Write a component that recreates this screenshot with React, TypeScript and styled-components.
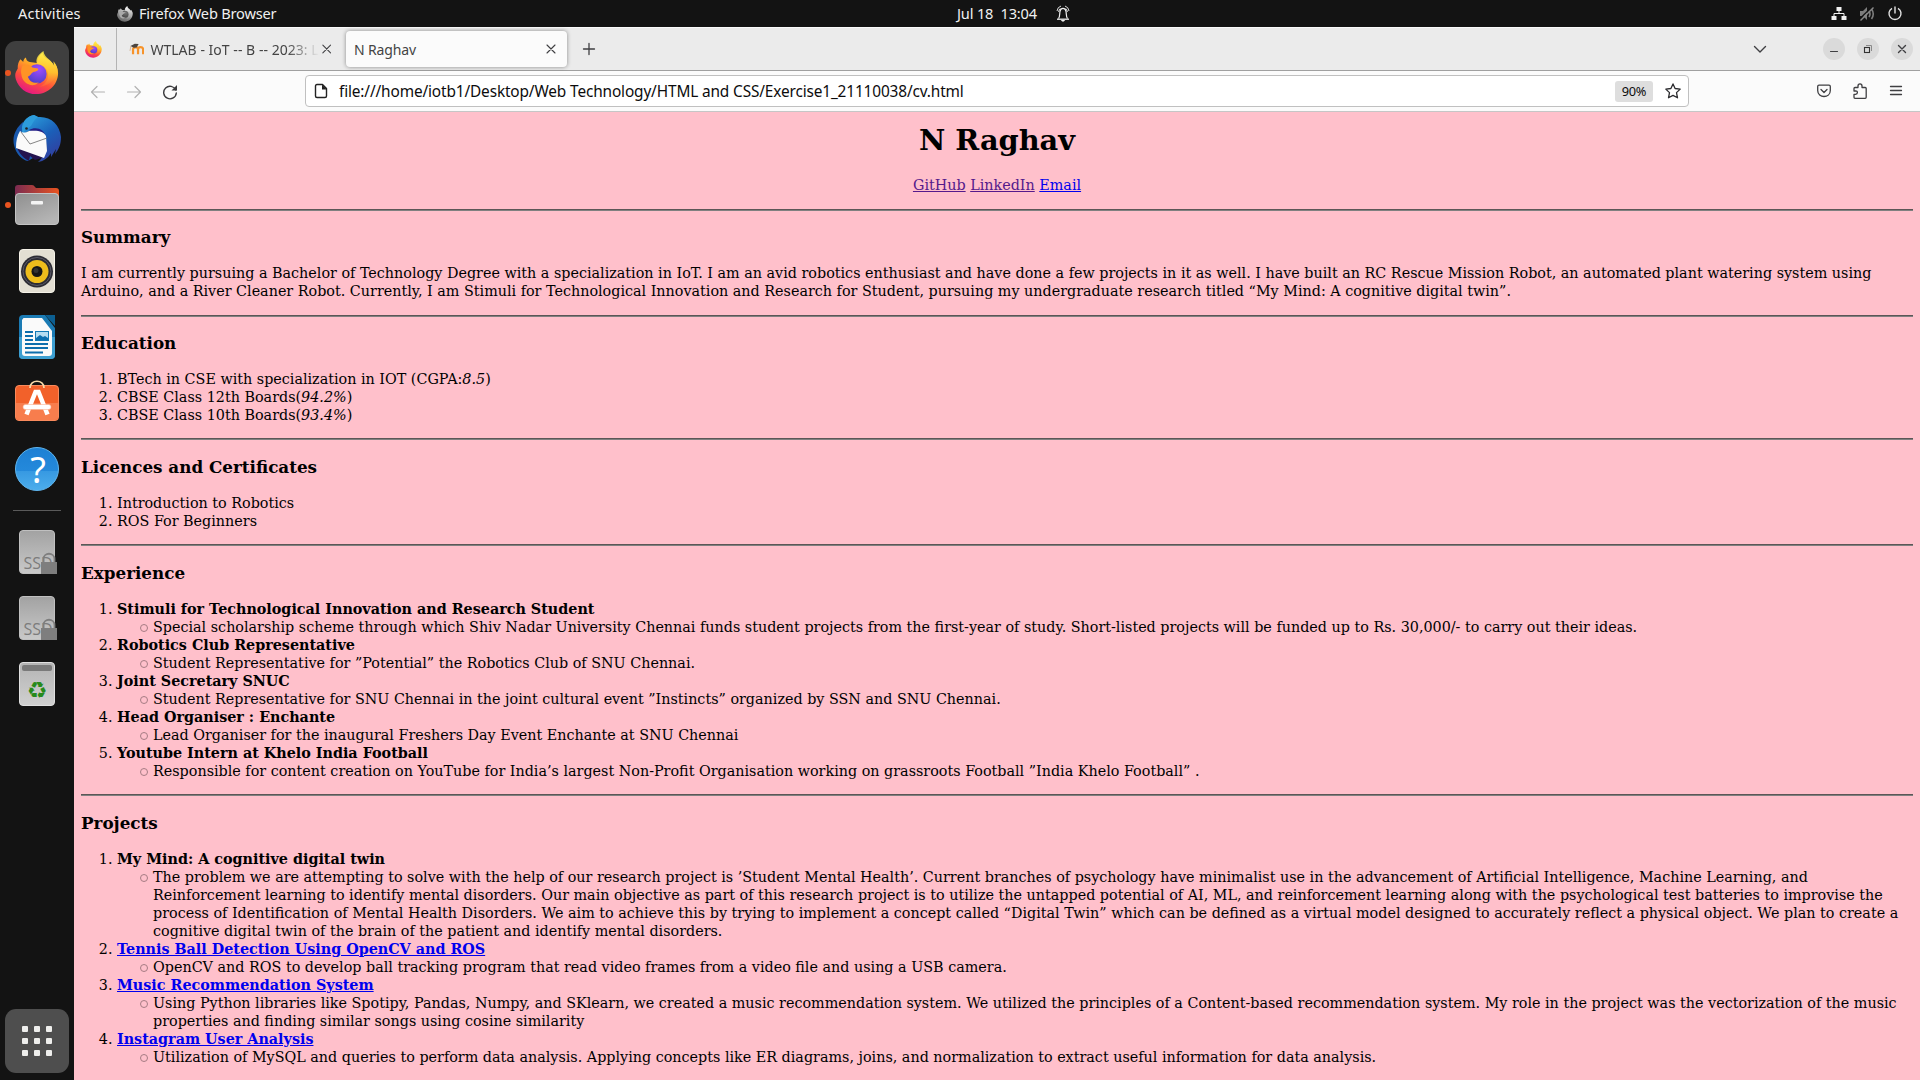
import React from "react";
import styled, { createGlobalStyle } from "styled-components";

const ui = `"Noto Sans", "Open Sans", sans-serif`;

const GlobalStyle = createGlobalStyle`
  * { box-sizing: border-box; }
  body { margin: 0; background: #131313; overflow: hidden; }
`;

const Desktop = styled.div`
  width: 1920px;
  height: 1080px;
  display: flex;
  flex-direction: column;
  background: #131313;
  overflow: hidden;
`;

const TopBar = styled.header`
  height: 27px;
  flex: none;
  display: grid;
  grid-template-columns: 1fr auto 1fr;
  align-items: center;
  color: #f0f0f0;
  font-family: ${ui};
  font-size: 14.6px;
  line-height: 24px;
  white-space: pre;
  span { padding-bottom: 2px; }
`;
const TopLeft = styled.div`
  display: flex;
  align-items: center;
  padding-left: 18px;
`;
const Activities = styled.span`
  width: 99px;
  letter-spacing: 0.2px;
`;
const AppName = styled.span`
  margin-left: 6px;
  letter-spacing: -0.2px;
`;
const Clock = styled.div`
  display: flex;
  align-items: center;
  gap: 19px;
  padding-left: 107px;
  letter-spacing: -0.17px;
`;
const Tray = styled.div`
  display: flex;
  justify-content: flex-end;
  align-items: center;
  gap: 12px;
  padding-right: 17px;
`;

const Main = styled.div`
  flex: 1;
  min-height: 0;
  display: flex;
`;

const Dock = styled.nav`
  width: 74px;
  flex: none;
  display: flex;
  flex-direction: column;
  gap: 2px;
  padding: 14px 5px 7px;
`;
const Tile = styled.div<{ $bg?: string; $running?: boolean; $last?: boolean }>`
  width: 64px;
  height: 64px;
  border-radius: 11px;
  background: ${(p) => p.$bg || "transparent"};
  display: flex;
  align-items: center;
  justify-content: center;
  position: relative;
  ${(p) => p.$last && "margin-top: auto;"}
  &::before {
    content: "";
    display: ${(p) => (p.$running ? "block" : "none")};
    position: absolute;
    left: 0;
    top: 29px;
    width: 6px;
    height: 6px;
    border-radius: 50%;
    background: #e95420;
  }
`;
const DockRule = styled.div`
  height: 1px;
  margin: 7px 8px;
  background: #5a5a5a;
`;

const Browser = styled.section`
  flex: 1;
  min-width: 0;
  display: flex;
  flex-direction: column;
`;

const TabStrip = styled.div`
  height: 44px;
  flex: none;
  display: flex;
  background: #ebebeb;
  border-top: 1px solid #fafafa;
  border-bottom: 1px solid #a0a0a0;
  font-family: ${ui};
  font-size: 14px;
  color: #444;
`;
const PinnedTab = styled.div`
  width: 43px;
  border-right: 1px solid #b4b4b4;
  display: flex;
  align-items: center;
  justify-content: center;
  padding-right: 3px;
`;
const Tab = styled.div<{ $active?: boolean }>`
  width: 221px;
  height: 36px;
  margin: 3px 0 0 ${(p) => (p.$active ? 8 : 0)}px;
  padding: 0 ${(p) => (p.$active ? 8 : 4)}px 0 ${(p) => (p.$active ? 8 : 12)}px;
  display: flex;
  align-items: center;
  border-radius: 4px;
  background: ${(p) => (p.$active ? "#fbfbfb" : "transparent")};
  box-shadow: ${(p) => (p.$active ? "0 0 4px rgba(0,0,0,.42)" : "none")};
`;
const TabTitle = styled.span<{ $fade?: boolean }>`
  flex: 1;
  white-space: nowrap;
  line-height: 20px;
  padding-top: 1px;
  letter-spacing: ${(p) => (p.$fade ? "0.03px" : "-0.15px")};
  margin-left: ${(p) => (p.$fade ? 6 : 0)}px;
  mask-image: ${(p) => (p.$fade ? "linear-gradient(to left, transparent 0, #000 32px)" : "none")};
`;
const NewTab = styled.div`
  display: flex;
  align-items: center;
  padding-left: 15px;
`;
const WindowControls = styled.div`
  margin-left: auto;
  display: flex;
  align-items: center;
  gap: 12px;
  padding-right: 7px;
`;
const AllTabs = styled.div`
  margin-right: 43px;
  display: flex;
`;
const RoundButton = styled.div`
  width: 22px;
  height: 22px;
  border-radius: 50%;
  background: #dadada;
  display: flex;
`;

const Toolbar = styled.div`
  height: 41px;
  flex: none;
  display: flex;
  align-items: center;
  background: #fbfbfb;
  border-bottom: 1px solid #c6c6c6;
`;
const NavButtons = styled.div`
  width: 231px;
  display: flex;
  gap: 20px;
  padding: 1px 0 0 16px;
`;
const UrlBar = styled.div`
  width: 1384px;
  height: 32px;
  border: 1px solid #c0c0c0;
  border-radius: 4px;
  background: #fff;
  display: flex;
  align-items: center;
  padding: 0 7px 0 7px;
  font-family: ${ui};
  color: #0c0c0d;
`;
const Url = styled.span`
  flex: 1;
  margin-left: 10px;
  padding-top: 2px;
  font-size: 15.4px;
  letter-spacing: -0.14px;
  line-height: 24px;
  white-space: nowrap;
`;
const ZoomBadge = styled.span`
  width: 38px;
  height: 21px;
  border-radius: 3px;
  background: #dedede;
  font-size: 12.8px;
  line-height: 21px;
  text-align: center;
  letter-spacing: -0.3px;
  margin-right: 12px;
`;
const Actions = styled.div`
  margin-left: auto;
  display: flex;
  gap: 20px;
  padding-right: 16px;
`;

const Page = styled.main`
  flex: 1;
  min-height: 0;
  overflow: hidden;
  background: #ffc0cb;
  padding: 0 7px;
  font-family: "DejaVu Serif", serif;
  font-size: 14.34px;
  line-height: 18px;
  color: #000;
`;
const Name = styled.h1`
  font-size: 28.8px;
  line-height: 34px;
  margin: 10.6px 0 19.2px;
  text-align: center;
`;
const Links = styled.p`
  margin: 0 0 14.85px;
  text-align: center;
`;
const Anchor = styled.a<{ $visited?: boolean }>`
  color: ${(p) => (p.$visited ? "#551a8b" : "#0000ee")};
  text-decoration: underline;
`;
const Rule = styled.hr`
  height: 2px;
  margin: 0;
  border: 0;
  border-top: 1px solid #5c5656;
  background: #808080;
`;
const Heading = styled.h3`
  font-size: 16.78px;
  line-height: 19.78px;
  margin: 17.55px 0 16.5px;
`;
const Paragraph = styled.p`
  margin: 0 0 14.05px;
`;
const Numbered = styled.ol`
  margin: 0 0 14.05px;
  padding-left: 36px;
`;
const Bullets = styled.ul`
  margin: 0;
  padding-left: 36px;
  list-style: none;
  li { position: relative; }
  li::before {
    content: "";
    position: absolute;
    left: -13px;
    top: 6px;
    width: 6px;
    height: 6px;
    border: 1px solid #a67c84;
    border-radius: 50%;
  }
`;

const FirefoxIcon = ({ size, mono }: { size: number; mono?: boolean }) => {
  const id = "fx" + size;
  return (
    <svg width={size} height={size} viewBox="0 0 48 48">
      <defs>
        <linearGradient id={id + "a"} x1="0.75" y1="0.05" x2="0.3" y2="1">
          <stop offset="0" stopColor={mono ? "#eee" : "#fff44f"} />
          <stop offset="0.35" stopColor={mono ? "#bbb" : "#ffa526"} />
          <stop offset="0.65" stopColor={mono ? "#888" : "#ff4f3c"} />
          <stop offset="1" stopColor={mono ? "#666" : "#e31587"} />
        </linearGradient>
        <radialGradient id={id + "b"} cx="0.6" cy="0.25" r="0.8">
          <stop offset="0" stopColor={mono ? "#777" : "#a14bff"} />
          <stop offset="1" stopColor={mono ? "#444" : "#4a3fc8"} />
        </radialGradient>
        <linearGradient id={id + "c"} x1="0.5" y1="0" x2="0.5" y2="1">
          <stop offset="0" stopColor={mono ? "#fff" : "#fff04a"} />
          <stop offset="0.6" stopColor={mono ? "#bbb" : "#ffc22e"} />
          <stop offset="1" stopColor={mono ? "#999" : "#ff5a3a"} />
        </linearGradient>
      </defs>
      <path fill={`url(#${id}a)`} d="M30 2c-4 3-6 8-6 11l-8-1c-3-1-4-3-4-5-2 1-3 3-3 5l-3-3c-3 4-3 7-3 10l-2 4C0 25 0 28 1 31c3 9 11 16 22 16 13 0 24-10 24-23 0-5-2-9-5-12l1 5C40 9 31 9 30 2z" />
      <path fill={`url(#${id}c)`} d="M31 0c-6 4-9 9-7 14 9 1 13 8 12 14-1 6-5 9-9 11 9-1 17-7 19-15 1-5-1-9-4-13l1 6C40 9 32 8 31 0z" opacity="0.85" />
      <circle cx="24" cy="25" r="10.500" fill={`url(#${id}b)`} />
      <path fill={mono ? "#aaa" : "#ff9326"} d="M8 16c5-2 9-1 11 2l6 1c1 2-1 3-5 4-3 2-3 4-6 5 2 6 7 8 12 6-6 7-18 2-19-8-1-4 0-7 1-10z" />
    </svg>
  );
};

const ThunderbirdIcon = () => (
  <svg width="48" height="48" viewBox="0 0 48 48">
    <defs>
      <linearGradient id="tb" x1="0.2" y1="0" x2="0.8" y2="1">
        <stop offset="0" stopColor="#2b9fdd" />
        <stop offset="0.5" stopColor="#1b5fb8" />
        <stop offset="1" stopColor="#343a9c" />
      </linearGradient>
    </defs>
    <path fill="#1959ae" d="M10 7C3 13-1 21 1 30c2 9 8 15 14 16l10-6-14-26z" />
    <path fill="#24134f" d="M4 33c4 9 10 12 12 13l1-5 5 4 10-3z" />
    <path fill="url(#tb)" d="M9 12C10 5 15 1 21 0l4 2c13-1 22 8 23 20 0 7-2 12-6 17l1-5-5 8v-4c-3 5-7 8-13 9 7-6 9-13 8-21-1-8-9-12-17-10L9 20z" />
    <path fill="#2d9cdb" d="M9 13C11 5 16 1 21 0l4 2c-3 2-5 5-7 9l-6 4-2 4z" />
    <path fill="#241f86" d="M16 15c7-4 15-1 17 7z" />
    <path fill="#fafafa" d="M7 16c3 2 5 2 9 0 8-1 15 0 17 5l1 15-3 7L3 33c0-7 1-12 4-17z" />
    <path fill="none" stroke="#777" strokeWidth="0.9" d="M8 17l9 12 17-6" />
    <circle cx="13.5" cy="13.5" r="1.3" fill="#222" />
  </svg>
);

const FilesIcon = () => (
  <svg width="48" height="48" viewBox="0 0 48 48">
    <defs>
      <linearGradient id="fa"><stop offset="0" stopColor="#7b2b51" /><stop offset="1" stopColor="#e95420" /></linearGradient>
      <linearGradient id="fb" x2="0.6" y2="1"><stop offset="0" stopColor="#8f8f8f" /><stop offset="1" stopColor="#b5b5b5" /></linearGradient>
    </defs>
    <path fill="url(#fa)" d="M5 4h14q2 0 3 2l1 1h20q3 0 3 3v12H2V7q0-3 3-3z" />
    <rect x="2.5" y="12.5" width="43" height="31" rx="3.5" fill="url(#fb)" stroke="#c4c4c4" />
    <rect x="18" y="20" width="12" height="3.5" rx="1" fill="#f4f4f4" />
  </svg>
);

const RhythmboxIcon = () => (
  <svg width="48" height="48" viewBox="0 0 48 48">
    <rect x="6.5" y="2.5" width="35" height="43" rx="3.5" fill="#e3dfd3" stroke="#f5f2e8" />
    <circle cx="24" cy="24.500" r="16" fill="#2c2c34" />
    <circle cx="24" cy="24.500" r="14" fill="none" stroke="#5b5a67" />
    <circle cx="24" cy="24.500" r="11.500" fill="#eebd1c" />
    <circle cx="24" cy="24.500" r="5.500" fill="#171717" />
    <circle cx="23" cy="23.500" r="2.500" fill="#333" />
  </svg>
);

const WriterIcon = () => (
  <svg width="48" height="48" viewBox="0 0 48 48">
    <path fill="#1b7bb4" d="M10 2h22l10 13v27q0 4-4 4H10q-4 0-4-4V6q0-4 4-4z" />
    <path fill="#3d9fd1" d="M6 24h36v18q0 4-4 4H10q-4 0-4-4z" />
    <path fill="#0c5f91" d="M32 2h10v11z" />
    <path fill="#fafafa" d="M10.500 5H29l10 13v22q0 3-3 3H12q-3 0-3-3V7z" />
    <path stroke="#0d6ead" strokeWidth="2" d="M12 19h8M12 23h8M12 27h8M12 31h23M12 35h23M12 39.500h18" />
    <rect x="22.500" y="18.500" width="13" height="9" fill="#b6dcf0" stroke="#1379b5" />
    <path fill="#0d6ead" d="M23 27v-2l4-3 3 2 2-1 3 2v2z" />
  </svg>
);

const SoftwareIcon = () => (
  <svg width="48" height="48" viewBox="0 1 48 48">
    <rect x="2.500" y="7.500" width="43" height="35" rx="3.500" fill="#f2612a" stroke="#f98a5c" />
    <path fill="#f77d4d" d="M3 25h42v14q0 3-3 3H6q-3 0-3-3z" />
    <path fill="none" stroke="#f6d9a9" strokeWidth="1.700" d="M17 10c0-9 14-9 14 0" />
    <path fill="none" stroke="#fff" strokeWidth="4.500" d="M13.500 36.500L22.500 14h3L34.500 36.500" />
    <rect x="10" y="26.500" width="28" height="5" rx="2.500" fill="#fff" stroke="#f9b194" strokeWidth="0.600" />
  </svg>
);

const HelpText = styled.text`
  font-family: ${ui};
  font-size: 36px;
  fill: #fff;
  text-anchor: middle;
`;
const HelpIcon = () => (
  <svg width="48" height="48" viewBox="0 0 48 48">
    <defs>
      <linearGradient id="hp" x2="0" y2="1">
        <stop offset="0" stopColor="#1d80d4" /><stop offset="0.54" stopColor="#2489db" />
        <stop offset="0.55" stopColor="#3799e2" /><stop offset="1" stopColor="#4daeec" />
      </linearGradient>
    </defs>
    <circle cx="24" cy="24" r="21.500" fill="url(#hp)" stroke="#5fb5ee" />
    <HelpText x="25" y="37.500">?</HelpText>
  </svg>
);

const SsdText = styled.text`
  font-family: "Open Sans", sans-serif;
  font-size: 16px;
  fill: #7c7c7c;
`;
const SsdIcon = () => (
  <svg width="48" height="48" viewBox="0 0 48 48">
    <defs><linearGradient id="sd" x2="0" y2="1"><stop offset="0" stopColor="#a2a2a2" /><stop offset="1" stopColor="#c9c9c9" /></linearGradient></defs>
    <rect x="6.500" y="2.500" width="35" height="43" rx="3.500" fill="url(#sd)" stroke="#c0c0c0" />
    <SsdText x="10.500" y="41">SSD</SsdText>
    <path fill="none" stroke="#7e7e7e" strokeWidth="1.800" d="M30.500 35v-4c0-7 11-7 11 0v4" />
    <rect x="28" y="34" width="16" height="12" fill="#7e7e7e" />
  </svg>
);

const RecycleText = styled.text`
  font-family: "DejaVu Sans", sans-serif;
  font-size: 23px;
  fill: #278a1b;
  text-anchor: middle;
`;
const TrashIcon = () => (
  <svg width="48" height="48" viewBox="0 0 48 48">
    <defs><linearGradient id="tr" x2="0" y2="1"><stop offset="0" stopColor="#b4b4b4" /><stop offset="1" stopColor="#d0d0d0" /></linearGradient></defs>
    <rect x="6.500" y="2.500" width="35" height="43" rx="3.500" fill="url(#tr)" stroke="#e0e0e0" />
    <rect x="9" y="5" width="30" height="6" rx="2" fill="#7a7a7a" />
    <RecycleText x="24" y="38">♻</RecycleText>
  </svg>
);

const GridIcon = () => (
  <svg width="30" height="30" viewBox="0 0 30 30" fill="#eeeeec">
    {[0, 12, 24].map((y) => [0, 12, 24].map((x) => <rect key={`${x}-${y}`} x={x} y={y} width="6" height="6" rx="1" />))}
  </svg>
);

const MoodleIcon = () => (
  <svg width="16" height="16" viewBox="0 0 16 16">
    <path fill="none" stroke="#f7932a" strokeWidth="2.300" d="M4.200 13.500V8.500q0-2 2.500-2.500 2.700 0 2.700 2.500v5M9.400 8.500q0-2.500 2.600-2.500 2.700 0 2.700 2.500v5" />
    <path fill="#4b4540" d="M1.500 5L6 2.500l4 .3-2 3.700-3 .2z" />
    <path fill="none" stroke="#c9a27c" strokeWidth="0.700" d="M2 5l-1 5" />
  </svg>
);

const Glyph = ({ d, size = 16, color = "#3f3f42", w = 1.3, fill = "none" }: { d: string; size?: number; color?: string; w?: number; fill?: string }) => (
  <svg width={size} height={size} viewBox={`0 0 ${size} ${size}`} fill={fill} stroke={color} strokeWidth={w} strokeLinecap="round" strokeLinejoin="round">
    <path d={d} />
  </svg>
);

const crossPath = "M4 4l8 8M12 4l-8 8";

export default function App() {
  return (
    <Desktop>
      <GlobalStyle />
      <TopBar>
        <TopLeft>
          <Activities>Activities</Activities>
          <FirefoxIcon size={16} mono />
          <AppName>Firefox Web Browser</AppName>
        </TopLeft>
        <Clock>
          <span>Jul 18  13:04</span>
          <svg width="14" height="17" viewBox="0 0 14 17" fill="none" stroke="#f0f0f0" strokeWidth="1">
            <path strokeWidth="1.300" d="M1 14.200h12" />
            <path strokeWidth="1.200" d="M2.500 13.500C4 12 3.500 9 4 6.500C4.500 2.200 9.500 2.200 10 6.500C10.500 9 10 12 11.500 13.500" />
            <path d="M5 1Q1.500 2 1 6M9 1Q12.500 2 13 6M4.300 3.500Q3 4.500 2.600 7M9.700 3.500Q11 4.500 11.400 7" strokeWidth="0.900" />
            <path fill="#f0f0f0" stroke="none" d="M4.800 15h4.400q-2.200 3.500-4.400 0z" />
          </svg>
        </Clock>
        <Tray>
          <svg width="16" height="16" viewBox="0 0 16 16" fill="#f2f2f2">
            <path d="M5.500 1h5v4h-5zM.5 10h5v4h-5zM10.500 10h5v4h-5z" />
            <path fill="none" stroke="#f2f2f2" d="M8 5v3M3 10.500v-3h10v3" />
          </svg>
          <svg width="16" height="16" viewBox="0 0 16 16" fill="#7c7c7c">
            <path d="M1 5h3l4-4v13l-4-4H1z" />
            <path fill="none" stroke="#7c7c7c" strokeWidth="1.600" d="M10 5q2 3 0 6M12.500 3q3.500 5 0 10" />
            <path stroke="#131313" strokeWidth="1.300" d="M0 13.500L14 0" />
            <path stroke="#888" strokeWidth="1.500" d="M1.500 14.500L14.500 1.500" />
          </svg>
          <svg width="16" height="16" viewBox="0 0 16 16" fill="none" stroke="#e4e4e4" strokeWidth="1.400">
            <path d="M8 .5v7M5 2.300a6 6 0 1 0 6 0" />
          </svg>
        </Tray>
      </TopBar>
      <Main>
        <Dock>
          <Tile $bg="#3f3f3f" $running><FirefoxIcon size={44} /></Tile>
          <Tile><ThunderbirdIcon /></Tile>
          <Tile $running><FilesIcon /></Tile>
          <Tile><RhythmboxIcon /></Tile>
          <Tile><WriterIcon /></Tile>
          <Tile><SoftwareIcon /></Tile>
          <Tile><HelpIcon /></Tile>
          <DockRule />
          <Tile><SsdIcon /></Tile>
          <Tile><SsdIcon /></Tile>
          <Tile><TrashIcon /></Tile>
          <Tile $bg="#4e4e4e" $last><GridIcon /></Tile>
        </Dock>
        <Browser>
          <TabStrip>
            <PinnedTab><FirefoxIcon size={17} /></PinnedTab>
            <Tab>
              <MoodleIcon />
              <TabTitle $fade>WTLAB - IoT -- B -- 2023: L</TabTitle>
              <Glyph d={crossPath} w={1.1} />
            </Tab>
            <Tab $active>
              <TabTitle>N Raghav</TabTitle>
              <Glyph d={crossPath} w={1.1} />
            </Tab>
            <NewTab><Glyph d="M7 1.500v11M1.500 7h11" size={14} /></NewTab>
            <WindowControls>
              <AllTabs><Glyph d="M2.500 5.500l5.500 5.500 5.500-5.500" w={1.4} /></AllTabs>
              <RoundButton><Glyph size={22} d="M7.500 13.500h7" w={1.1} /></RoundButton>
              <RoundButton>
                <svg width="22" height="22" viewBox="0 0 22 22" fill="none">
                  <path stroke="#8a8a8a" d="M9 7.500h5.500V13" />
                  <rect x="7.500" y="9.500" width="5" height="5" stroke="#333" strokeWidth="1.100" />
                </svg>
              </RoundButton>
              <RoundButton><Glyph size={22} d="M7.500 7.500l7 7M14.500 7.500l-7 7" w={1.4} /></RoundButton>
            </WindowControls>
          </TabStrip>
          <Toolbar>
            <NavButtons>
              <Glyph d="M14.500 8H1.500M7 2.500L1.500 8 7 13.500" color="#b2b2b2" w={1.2} />
              <Glyph d="M1.500 8h13M9 2.500L14.500 8 9 13.500" color="#b2b2b2" w={1.2} />
              <svg width="16" height="16" viewBox="0 0 16 16" fill="none" stroke="#3a3a3d" strokeWidth="1.400" strokeLinecap="round">
                <path d="M13.800 6A6.300 6.300 0 1 0 14.300 9" />
                <path fill="#3a3a3d" stroke="none" d="M15 1v5.500H9.500z" />
              </svg>
            </NavButtons>
            <UrlBar>
              <svg width="16" height="16" viewBox="0 0 16 16" fill="none" stroke="#222" strokeWidth="1.400" strokeLinejoin="round">
                <path d="M4 1.500h5.500l4 4v7.500q0 1.500-1.500 1.500H4q-1.500 0-1.500-1.500V3q0-1.500 1.500-1.500z" />
                <path fill="#222" stroke="none" d="M9 1.500l5 5H9z" />
              </svg>
              <Url>file:///home/iotb1/Desktop/Web Technology/HTML and CSS/Exercise1_21110038/cv.html</Url>
              <ZoomBadge>90%</ZoomBadge>
              <Glyph d="M8 .9l2.100 4.600 5.100.6-3.700 3.500 1 5.200L8 12.400l-4.500 2.400 1-5.200L.8 6.100l5.100-.6z" color="#2b2b2e" w={1.3} />
            </UrlBar>
            <Actions>
              <Glyph d="M3 2.200h10q1.300 0 1.300 1.300v4c0 8-12.600 8-12.600 0v-4Q1.700 2.200 3 2.200M5 6.500l3 3 3-3" />
              <Glyph d="M6 4.500V3Q6 .8 8 .8T10 3v1.500h3.200q1 0 1 1v8.800q0 1-1 1H3q-1 0-1-1v-3h1.500q1.900 0 1.900-1.700T3.500 8H2V5.500q0-1 1-1z" w={1.3} />
              <Glyph d="M2.500 3.500h11M2.500 7.500h11M2.500 11.500h11" />
            </Actions>
          </Toolbar>
          <Page>
            <Name>N Raghav</Name>
            <Links>
              <Anchor $visited>GitHub</Anchor> <Anchor $visited>LinkedIn</Anchor> <Anchor>Email</Anchor>
            </Links>
            <Rule />
            <Heading>Summary</Heading>
            <Paragraph>
              I am currently pursuing a Bachelor of Technology Degree with a specialization in IoT. I am an avid robotics enthusiast and have done a few projects in it as well. I have built an RC Rescue Mission Robot, an automated plant watering system using Arduino, and a River Cleaner Robot. Currently, I am Stimuli for Technological Innovation and Research for Student, pursuing my undergraduate research titled “My Mind: A cognitive digital twin”.
            </Paragraph>
            <Rule />
            <Heading>Education</Heading>
            <Numbered>
              <li>BTech in CSE with specialization in IOT (CGPA:<i>8.5</i>)</li>
              <li>CBSE Class 12th Boards(<i>94.2%</i>)</li>
              <li>CBSE Class 10th Boards(<i>93.4%</i>)</li>
            </Numbered>
            <Rule />
            <Heading>Licences and Certificates</Heading>
            <Numbered>
              <li>Introduction to Robotics</li>
              <li>ROS For Beginners</li>
            </Numbered>
            <Rule />
            <Heading>Experience</Heading>
            <Numbered>
              <li><b>Stimuli for Technological Innovation and Research Student</b>
                <Bullets><li>Special scholarship scheme through which Shiv Nadar University Chennai funds student projects from the first-year of study. Short-listed projects will be funded up to Rs. 30,000/- to carry out their ideas.</li></Bullets>
              </li>
              <li><b>Robotics Club Representative</b>
                <Bullets><li>Student Representative for ”Potential” the Robotics Club of SNU Chennai.</li></Bullets>
              </li>
              <li><b>Joint Secretary SNUC</b>
                <Bullets><li>Student Representative for SNU Chennai in the joint cultural event ”Instincts” organized by SSN and SNU Chennai.</li></Bullets>
              </li>
              <li><b>Head Organiser : Enchante</b>
                <Bullets><li>Lead Organiser for the inaugural Freshers Day Event Enchante at SNU Chennai</li></Bullets>
              </li>
              <li><b>Youtube Intern at Khelo India Football</b>
                <Bullets><li>Responsible for content creation on YouTube for India’s largest Non-Profit Organisation working on grassroots Football ”India Khelo Football” .</li></Bullets>
              </li>
            </Numbered>
            <Rule />
            <Heading>Projects</Heading>
            <Numbered>
              <li><b>My Mind: A cognitive digital twin</b>
                <Bullets><li>The problem we are attempting to solve with the help of our research project is ’Student Mental Health’. Current branches of psychology have minimalist use in the advancement of Artificial Intelligence, Machine Learning, and Reinforcement learning to identify mental disorders. Our main objective as part of this research project is to utilize the untapped potential of AI, ML, and reinforcement learning along with the psychological test batteries to improvise the process of Identification of Mental Health Disorders. We aim to achieve this by trying to implement a concept called “Digital Twin” which can be defined as a virtual model designed to accurately reflect a physical object. We plan to create a cognitive digital twin of the brain of the patient and identify mental disorders.</li></Bullets>
              </li>
              <li><b><Anchor>Tennis Ball Detection Using OpenCV and ROS</Anchor></b>
                <Bullets><li>OpenCV and ROS to develop ball tracking program that read video frames from a video file and using a USB camera.</li></Bullets>
              </li>
              <li><b><Anchor>Music Recommendation System</Anchor></b>
                <Bullets><li>Using Python libraries like Spotipy, Pandas, Numpy, and SKlearn, we created a music recommendation system. We utilized the principles of a Content-based recommendation system. My role in the project was the vectorization of the music properties and finding similar songs using cosine similarity</li></Bullets>
              </li>
              <li><b><Anchor>Instagram User Analysis</Anchor></b>
                <Bullets><li>Utilization of MySQL and queries to perform data analysis. Applying concepts like ER diagrams, joins, and normalization to extract useful information for data analysis.</li></Bullets>
              </li>
            </Numbered>
          </Page>
        </Browser>
      </Main>
    </Desktop>
  );
}
